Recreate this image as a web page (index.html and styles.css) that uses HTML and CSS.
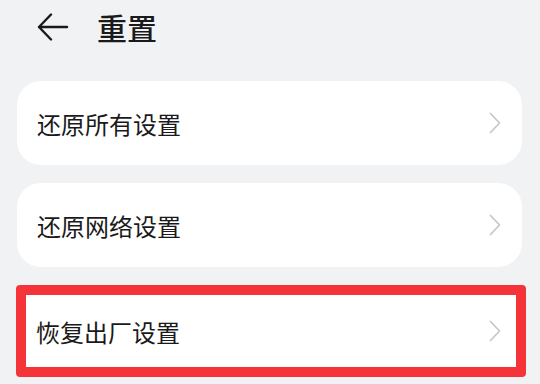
FILE: index.html
```html
<!DOCTYPE html>
<html lang="zh-CN">

<head>
    <meta charset="UTF-8">
    <meta name="viewport" content="width=device-width, initial-scale=1.0">
    <title>重置</title>
    <link rel="stylesheet" href="styles.css">
</head>

<body>

    <header class="header">
        <a class="back" href="#">
            <svg width="32" height="28" viewBox="0 0 32 28">
                <path d="M14 1.5 L2 14 L14 26.5 M2 14 H30" fill="none" stroke="#1a1a1a" stroke-width="2.4"
                    stroke-linecap="round" stroke-linejoin="round" />
            </svg>
        </a>
        <h1 class="title">重置</h1>
    </header>

    <div class="list">
        <div class="card">
            <span class="label">还原所有设置</span>
            <svg class="chev" width="12" height="22" viewBox="0 0 12 22">
                <path d="M1.5 1.5 L10.5 11 L1.5 20.5" />
            </svg>
        </div>
        <div class="card">
            <span class="label">还原网络设置</span>
            <svg class="chev" width="12" height="22" viewBox="0 0 12 22">
                <path d="M1.5 1.5 L10.5 11 L1.5 20.5" />
            </svg>
        </div>
        <div class="card marked">
            <span class="label">恢复出厂设置</span>
            <svg class="chev" width="12" height="22" viewBox="0 0 12 22">
                <path d="M1.5 1.5 L10.5 11 L1.5 20.5" />
            </svg>
        </div>
    </div>

</body>

</html>
```

FILE: styles.css
```css
body {
    margin: 0;
    background: #f1f2f4;
    color: #1a1a1a;
    font-family: "Noto Sans CJK SC", "Noto Sans", sans-serif;
}

.header {
    height: 54px;
    display: flex;
    align-items: center;
    padding-left: 37px;
}

.back {
    display: flex;
    width: 32px;
    height: 28px;
}

.title {
    margin: 0 0 0 28px;
    font-size: 30px;
    font-weight: 500;
    line-height: 1;
}

.list {
    margin-top: 27px;
    padding: 0 18px 0 17px;
    display: flex;
    flex-direction: column;
    gap: 18px;
}

.card {
    height: 84px;
    background: white;
    border-radius: 24px;
    display: flex;
    align-items: center;
    justify-content: space-between;
    padding: 0 21px 0 20px;
}

.label {
    font-size: 24px;
}

.chev path {
    fill: none;
    stroke: #c8c8c8;
    stroke-width: 1.8;
    stroke-linecap: round;
    stroke-linejoin: round;
}

.card.marked {
    height: 72px;
    margin: 0 -4px 0 -1px;
    border: 10px solid #f5343a;
    border-radius: 4px;
    padding: 0 15px 0 10px;
}
```
